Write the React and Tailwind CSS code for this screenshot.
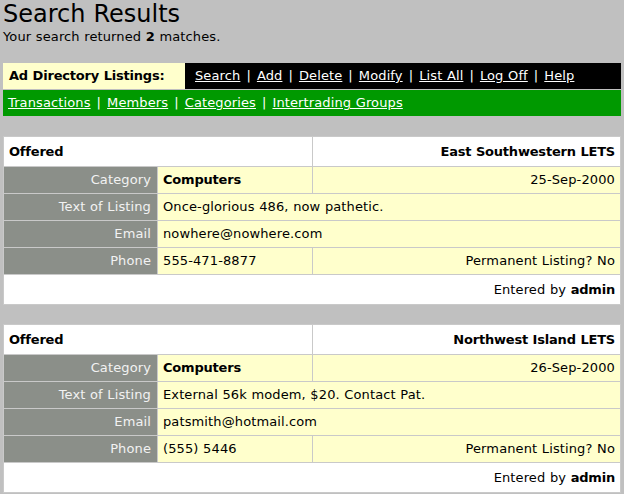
import React from "react";

const listings = [
  {
    type: "Offered",
    group: "East Southwestern LETS",
    category: "Computers",
    date: "25-Sep-2000",
    text: "Once-glorious 486, now pathetic.",
    email: "nowhere@nowhere.com",
    phone: "555-471-8877",
    permanent: "No",
    enteredBy: "admin",
  },
  {
    type: "Offered",
    group: "Northwest Island LETS",
    category: "Computers",
    date: "26-Sep-2000",
    text: "External 56k modem, $20. Contact Pat.",
    email: "patsmith@hotmail.com",
    phone: "(555) 5446",
    permanent: "No",
    enteredBy: "admin",
  },
];

const topLinks = ["Search", "Add", "Delete", "Modify", "List All", "Log Off", "Help"];
const subLinks = ["Transactions", "Members", "Categories", "Intertrading Groups"];

// grey label cell on the left of each listing row
const Label = ({ children }) => (
  <div className="bg-[#8b8f89] text-[#f2f2f2] text-right pr-[6px] h-[26px] flex items-center justify-end">
    {children}
  </div>
);

const Cell = ({ children, className = "" }) => (
  <div className={`bg-[#ffffcc] h-[26px] flex items-center px-[5px] ${className}`}>{children}</div>
);

const NavLinks = ({ links }) =>
  links.map((l, i) => (
    <React.Fragment key={l}>
      {i > 0 && <span className="px-[6px]">|</span>}
      <a href="#" className="underline">{l}</a>
    </React.Fragment>
  ));

const ListingCard = ({ item }) => (
  <div className="mx-[3px] bg-[#c9c9c9] p-px grid grid-cols-[153px_154px_1fr] gap-px">
    <div className="col-span-2 bg-white h-[29px] flex items-center pl-[5px] font-bold tracking-[-0.2px]">{item.type}</div>
    <div className="bg-white h-[29px] flex items-center justify-end pr-[5px] font-bold tracking-[-0.2px]">{item.group}</div>

    <Label>Category</Label>
    <Cell className="font-bold tracking-[-0.2px]">{item.category}</Cell>
    <Cell className="justify-end">{item.date}</Cell>

    <Label>Text of Listing</Label>
    <Cell className="col-span-2">{item.text}</Cell>

    <Label>Email</Label>
    <Cell className="col-span-2">{item.email}</Cell>

    <Label>Phone</Label>
    <Cell>{item.phone}</Cell>
    <Cell className="justify-end">Permanent Listing? {item.permanent}</Cell>

    <div className="col-span-3 bg-white h-[29px] flex items-center justify-end pr-[5px]">
      Entered by&nbsp;<b className="tracking-[-0.2px]">{item.enteredBy}</b>
    </div>
  </div>
);

const App = () => {
  return (
    <div className="min-h-screen bg-[#c0c0c0] font-['DejaVu_Sans',Verdana,sans-serif] text-[13px] text-black tracking-[0.12px] [word-spacing:0.3px]">
      <div className="px-[3px]">
        <h1 className="text-[24px] leading-[29px] tracking-normal">Search Results</h1>
        <p className="leading-[16px]">
          Your search returned <b>2</b> matches.
        </p>
      </div>

      <div className="mx-[3px] mt-[18px] flex h-[26px]">
        <div className="w-[182px] bg-[#ffffcc] font-bold tracking-[-0.2px] flex items-center pl-[6px]">Ad Directory Listings:</div>
        <div className="flex-1 bg-black text-white flex items-center pl-[10px]">
          <NavLinks links={topLinks} />
        </div>
      </div>
      <div className="mx-[3px] mt-px h-[26px] bg-[#009900] text-white flex items-center pl-[5px]">
        <NavLinks links={subLinks} />
      </div>

      <div className="mt-[20px] flex flex-col gap-[19px]">
        {listings.map((item, idx) => (
          <ListingCard key={idx} item={item} />
        ))}
      </div>
    </div>
  );
};

export default App;
